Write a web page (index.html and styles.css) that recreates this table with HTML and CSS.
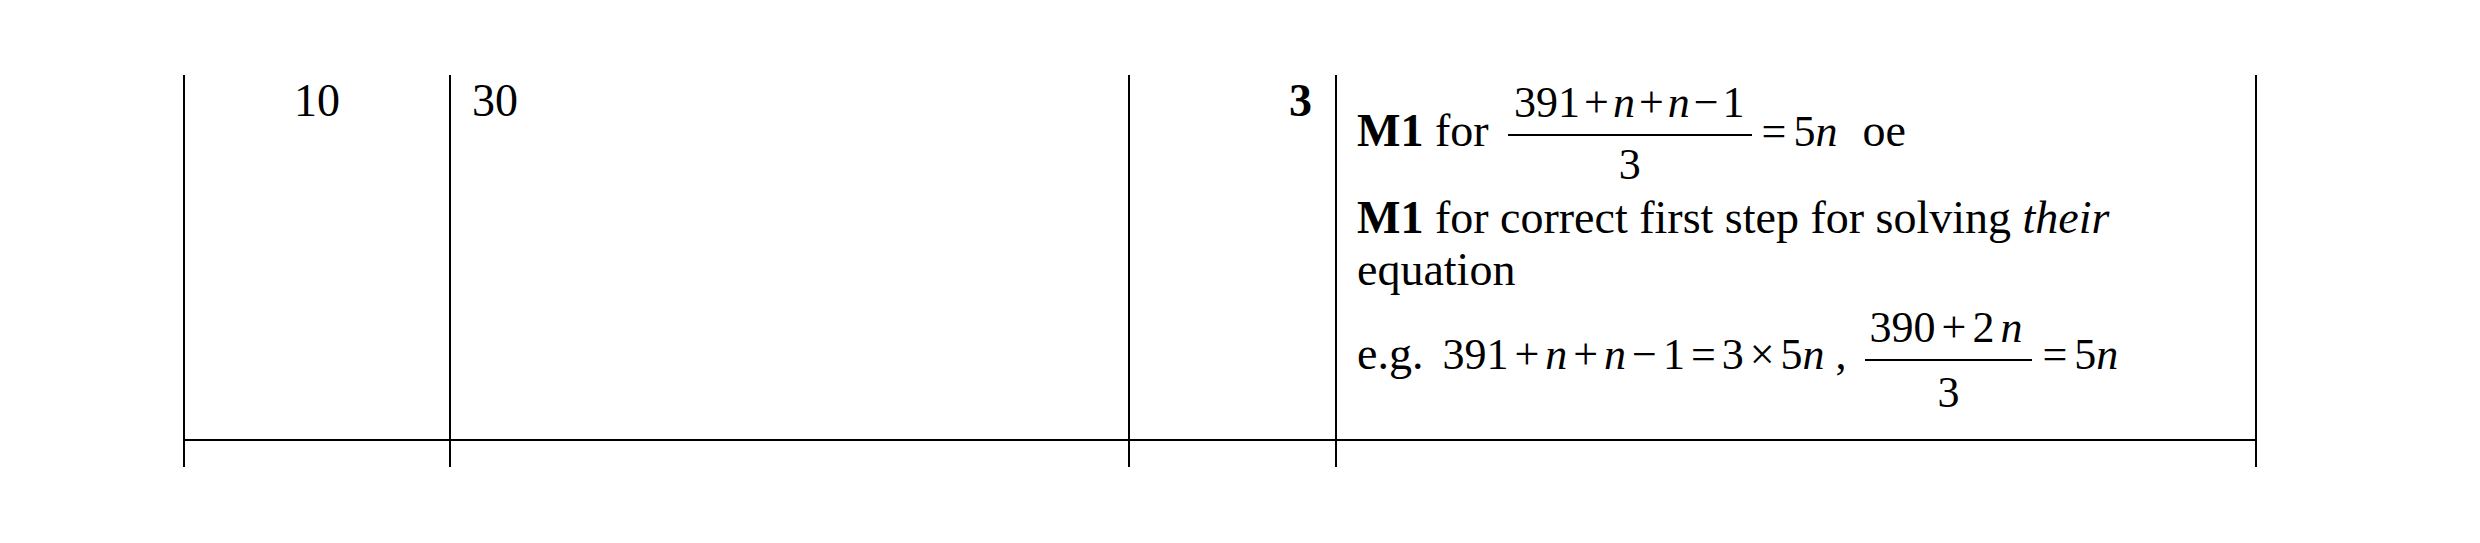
FILE: index.html
```html
<!DOCTYPE html>
<html lang="en">
<head>
<meta charset="utf-8">
<title>Mark scheme row</title>
<link rel="stylesheet" href="styles.css">
</head>
<body>
<div class="page">
  <div class="row row-main">
    <div class="cell cell-q">10</div>
    <div class="cell cell-ans">30</div>
    <div class="cell cell-mark"><b>3</b></div>
    <div class="cell cell-notes">
      <div class="ln ln-first"><b>M1</b> for <span class="math"><span class="frac frac-a"><span class="num">391<span class="op">+</span><i>n</i><span class="op">+</span><i>n</i><span class="op">−</span>1</span><span class="den">3</span></span><span class="op op-eq">=</span>5<i>n</i></span><span class="gap-oe"></span>oe</div>
      <div class="ln ln-text"><b>M1</b> for correct first step for solving <i>their</i> equation</div>
      <div class="ln ln-eg">e.g.<span class="gap"></span><span class="math">391<span class="op">+</span><i>n</i><span class="op">+</span><i>n</i><span class="op">−</span>1<span class="op">=</span>3<span class="op">×</span>5<i>n</i> , <span class="frac frac-b"><span class="num">390<span class="op">+</span>2<span class="thin"></span><i>n</i></span><span class="den">3</span></span><span class="op op-eq">=</span>5<i>n</i></span></div>
    </div>
  </div>
  <div class="row row-tail">
    <div class="cell"></div>
    <div class="cell"></div>
    <div class="cell"></div>
    <div class="cell"></div>
  </div>
</div>
</body>
</html>
```

FILE: styles.css
```css
html, body {
  margin: 0;
  padding: 0;
  background: #ffffff;
}

body {
  font-family: "Liberation Serif", "Times New Roman", serif;
  font-size: 46px;
  color: #000000;
}

.page {
  padding: 75px 0 0 183px;
}

.row {
  display: grid;
  grid-template-columns: 266px 679px 207px 922px;
  width: max-content;
}

.cell {
  box-sizing: border-box;
  border-left: 2px solid #000;
  line-height: 50px;
}

.cell:last-child {
  border-right: 2px solid #000;
}

.row-main .cell {
  border-bottom: 2px solid #000;
  padding-top: 1px;
}

.row-tail .cell {
  height: 26px;
}

.cell-q {
  text-align: center;
}

.row-main .cell-ans {
  padding-left: 21px;
}

.row-main .cell-mark {
  text-align: right;
  padding-right: 23px;
}

.row-main .cell-notes {
  padding: 6px 20px 24px 20px;
}

.ln {
  line-height: 52px;
}

.ln-text {
  margin-top: 5px;
}

.ln-eg {
  margin-top: 10px;
}

.math {
  font-family: "Liberation Serif", "Times New Roman", serif;
  font-size: 44px;
}

.op {
  margin: 0 6px;
}

.frac-a .op {
  margin: 0 4px;
}

.op-eq {
  margin: 0 7px 0 10px;
}

.gap {
  display: inline-block;
  width: 19px;
}

.gap-oe {
  display: inline-block;
  width: 25px;
}

.thin {
  display: inline-block;
  width: 6px;
}

.frac {
  display: inline-flex;
  flex-direction: column;
  align-items: center;
}

.num {
  line-height: 44px;
  padding: 0 7px 9px 6px;
  border-bottom: 2px solid #000;
}

.den {
  line-height: 44px;
}

.frac-a {
  vertical-align: 29px;
  margin-left: 8px;
}

.frac-a .den {
  padding-top: 7px;
}

.frac-b {
  vertical-align: 27px;
  margin-left: 7px;
}

.frac-b .num {
  padding: 0 10px 9px 5px;
}

.frac-b .den {
  padding-top: 10px;
}
```
